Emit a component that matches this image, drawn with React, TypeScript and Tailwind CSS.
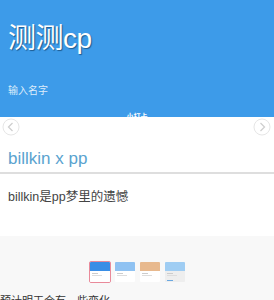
const thumbs = [
  { head: "bg-[#3a8ee6]", body: "bg-white", border: "border-[#e98a9a]" },
  { head: "bg-[#8fc2f2]", body: "bg-white", border: "border-transparent" },
  { head: "bg-[#e8b98e]", body: "bg-white", border: "border-transparent" },
  { head: "bg-[#9fcdf3]", body: "bg-[#eeeeee]", border: "border-transparent" },
];

function Chevron({ dir }: { dir: "left" | "right" }) {
  return (
    <svg width="18" height="18" viewBox="0 0 18 18">
      <circle cx="9" cy="9" r="8" fill="white" stroke="#e6e6e6" strokeWidth="1" />
      <path
        d={dir === "left" ? "M10.5 5 L6.5 9 L10.5 13" : "M7.5 5 L11.5 9 L7.5 13"}
        fill="none"
        stroke="#cfcfcf"
        strokeWidth="1.3"
      />
    </svg>
  );
}

export default function App() {
  return (
    <div
      className="w-[274px] h-[300px] overflow-hidden bg-[#f8f8f8]"
      style={{ fontFamily: '"Liberation Sans", "Noto Sans CJK SC", sans-serif' }}
    >
      <div className="h-[117px] bg-[#3d9be9] flex flex-col pl-2 relative overflow-hidden">
        <div
          className="mt-[22px] text-[28px] leading-[34px] text-white tracking-[-0.5px]"
          style={{ textShadow: "1px 1px 1px #1e5b8f" }}
        >
          测测cp
        </div>
        <div className="mt-[29px] text-[10px] leading-[12px] text-[#dcecfb]">输入名字</div>
        <div className="absolute left-0 right-0 top-[113px] text-center text-[7px] font-bold text-white leading-[8px]">
          小打卡
        </div>
      </div>
      <div className="bg-white h-[119px] relative">
        <div className="absolute left-[2px] top-[1px]">
          <Chevron dir="left" />
        </div>
        <div className="absolute right-[3px] top-[1px]">
          <Chevron dir="right" />
        </div>
        <div className="pt-[32px] pl-2 text-[17px] leading-[20px] text-[#5aa3cf]">billkin x pp</div>
        <div className="mt-[3px] h-[2px] bg-[#dedede]" />
        <div className="pt-[16px] pl-2 text-[12.5px] leading-[15px] text-[#444]">billkin是pp梦里的遗憾</div>
      </div>
      <div className="flex justify-center gap-[3px] mt-[25px]">
        {thumbs.map((t, i) => (
          <div
            key={i}
            className={`w-[22px] h-[22px] rounded-[2px] border ${t.border} overflow-hidden flex flex-col`}
          >
            <div className={`h-[9px] ${t.head}`} />
            <div className={`flex-1 ${t.body} px-[2px] pt-[2px]`}>
              <div className="h-[1px] w-[6px] bg-[#ccc]" />
              <div className="h-[1px] w-[10px] bg-[#ddd] mt-[1px]" />
              {i === 3 && <div className="h-[1px] w-[6px] bg-[#6aa8e0] mt-[4px]" />}
            </div>
          </div>
        ))}
      </div>
      <div className="mt-[12px] text-[11px] leading-[13px] text-[#333]">预计明天会有一些变化</div>
    </div>
  );
}
